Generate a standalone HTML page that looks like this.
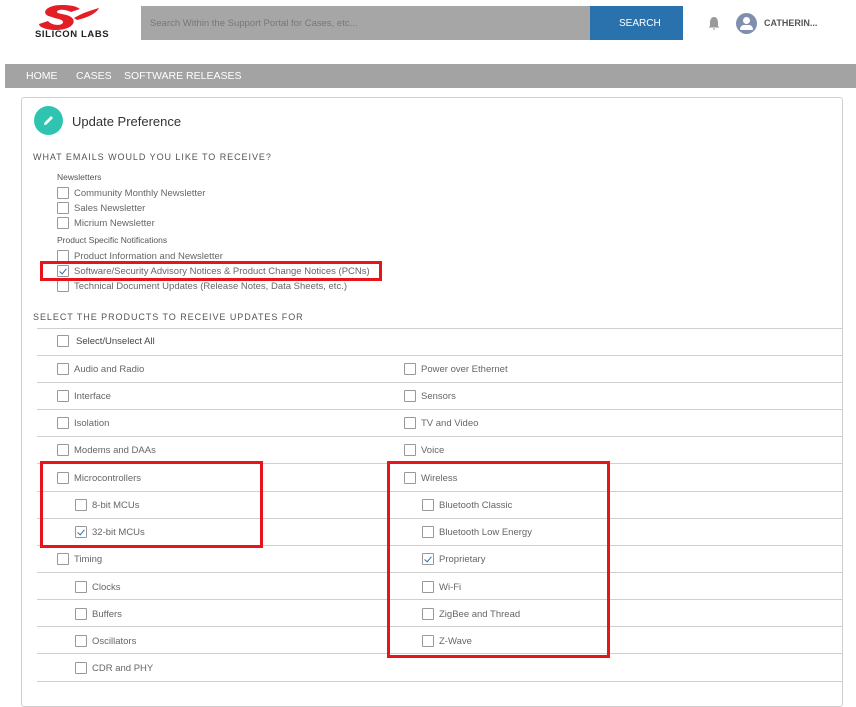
<!DOCTYPE html>
<html><head><meta charset="utf-8"><style>
*{margin:0;padding:0;box-sizing:border-box}
body{width:856px;height:700px;background:#fff;font-family:"Liberation Sans",sans-serif;position:relative;overflow:hidden;color:#555}
.a{position:absolute}
.cb{position:absolute;width:12px;height:12px;border:1px solid #999;background:#fff;border-radius:1px}
.t{position:absolute;font-size:9.5px;color:#666;white-space:nowrap;margin-top:1px}
.ln{position:absolute;height:1px;background:#cfcfcf}
.rb{position:absolute;border:3px solid #e8141c}
.ck::after{content:"";position:absolute;left:3px;top:1px;width:3px;height:6px;border:solid #2a6db0;border-width:0 1.5px 1.5px 0;transform:rotate(40deg)}
</style></head><body>
<!-- logo -->
<svg class="a" style="left:36px;top:3px" width="68" height="30" viewBox="0 0 68 30">
<path d="M16 14 C4 12 8 2 26 2 C34 2 40 3 44 6 L35 9 C29 6 21 6 21 9 C21 11 31 11 35 14 C42 19 35 27 20 27 C10 27 3 24 3 21 L12 18 C16 23 27 23 27 19 C27 16 20 16 16 14 Z" fill="#e21f26"/>
<path d="M38 15 C46 10 56 7 63 5 C60 11 50 15 41 17 Z" fill="#e21f26"/>
</svg>
<div class="t" style="left:35px;top:28px;font-size:9.5px;color:#222;letter-spacing:0.6px;font-weight:bold">SILICON LABS</div>
<div class="a" style="left:141px;top:6px;width:449px;height:34px;background:#a6a6a6"></div>
<div class="t" style="left:150px;top:17px;color:#777;font-size:9.5px">Search Within the Support Portal for Cases, etc...</div>
<div class="a" style="left:590px;top:6px;width:93px;height:34px;background:#2a72ad"></div>
<div class="t" style="left:619px;top:17px;color:#fff;font-size:10px">SEARCH</div>
<svg class="a" style="left:708px;top:16px" width="12" height="14" viewBox="0 0 12 14"><path d="M6 1 C3 1 2 4 2 7 L2 10 L0.5 11.5 L11.5 11.5 L10 10 L10 7 C10 4 9 1 6 1Z M4.5 12.5 L7.5 12.5 L6 14Z" fill="#9a9a9a"/></svg>
<div class="a" style="left:736px;top:13px;width:21px;height:21px;border-radius:50%;background:#7e90ae"></div>
<div class="a" style="left:743px;top:17px;width:7px;height:7px;border-radius:50%;background:#fff"></div>
<div class="a" style="left:740px;top:25px;width:13px;height:5px;border-radius:5px 5px 1px 1px;background:#fff"></div>
<div class="t" style="left:764px;top:17px;font-size:9px;font-weight:bold;color:#555">CATHERIN...</div>
<!-- nav -->
<div class="a" style="left:5px;top:64px;width:851px;height:24px;background:#a3a3a3"></div>
<div class="t" style="left:26px;top:69px;color:#fff;font-size:10.5px">HOME</div>
<div class="t" style="left:76px;top:69px;color:#fff;font-size:10.5px">CASES</div>
<div class="t" style="left:124px;top:69px;color:#fff;font-size:10.5px">SOFTWARE RELEASES</div>
<!-- card -->
<div class="a" style="left:21px;top:97px;width:822px;height:610px;border:1px solid #cfcfcf;border-radius:3px"></div>
<div class="a" style="left:34px;top:106px;width:29px;height:29px;border-radius:50%;background:#2ec4b0"></div>
<svg class="a" style="left:41px;top:113px" width="15" height="15" viewBox="0 0 15 15"><path d="M3 12 L3.5 9.5 L10 3 L12 5 L5.5 11.5 Z" fill="#fff"/></svg>
<div class="t" style="left:72px;top:113px;font-size:13px;color:#333">Update Preference</div>
<div class="t" style="left:33px;top:151px;font-size:9px;letter-spacing:0.95px;color:#555">WHAT EMAILS WOULD YOU LIKE TO RECEIVE?</div>
<div class="t" style="left:57px;top:171px;font-size:8.5px;color:#555">Newsletters</div>
<div class="cb" style="left:57px;top:187px"></div><div class="t" style="left:74px;top:187px">Community Monthly Newsletter</div>
<div class="cb" style="left:57px;top:202px"></div><div class="t" style="left:74px;top:202px">Sales Newsletter</div>
<div class="cb" style="left:57px;top:217px"></div><div class="t" style="left:74px;top:217px">Micrium Newsletter</div>
<div class="t" style="left:57px;top:234px;font-size:8.5px;color:#555">Product Specific Notifications</div>
<div class="cb" style="left:57px;top:250px"></div><div class="t" style="left:74px;top:250px">Product Information and Newsletter</div>
<div class="cb ck" style="left:57px;top:265px"></div><div class="t" style="left:74px;top:265px">Software/Security Advisory Notices &amp; Product Change Notices (PCNs)</div>
<div class="cb" style="left:57px;top:280px"></div><div class="t" style="left:74px;top:280px">Technical Document Updates (Release Notes, Data Sheets, etc.)</div>
<div class="rb" style="left:40px;top:261px;width:342px;height:20px"></div>
<div class="t" style="left:33px;top:311px;font-size:9px;letter-spacing:0.95px;color:#555">SELECT THE PRODUCTS TO RECEIVE UPDATES FOR</div>
<div class="ln" style="left:37px;top:328px;width:806px"></div>
<div class="cb" style="left:57px;top:335px"></div><div class="t" style="left:76px;top:335px;color:#444">Select/Unselect All</div>
<div class="ln" style="left:37px;top:355px;width:806px"></div>
<div class="ln" style="left:37px;top:382px;width:806px"></div>
<div class="ln" style="left:37px;top:409px;width:806px"></div>
<div class="ln" style="left:37px;top:436px;width:806px"></div>
<div class="ln" style="left:37px;top:463px;width:806px"></div>
<div class="ln" style="left:37px;top:491px;width:806px"></div>
<div class="ln" style="left:37px;top:518px;width:806px"></div>
<div class="ln" style="left:37px;top:545px;width:806px"></div>
<div class="ln" style="left:37px;top:572px;width:806px"></div>
<div class="ln" style="left:37px;top:599px;width:806px"></div>
<div class="ln" style="left:37px;top:626px;width:806px"></div>
<div class="ln" style="left:37px;top:653px;width:806px"></div>
<div class="ln" style="left:37px;top:681px;width:806px"></div>
<!-- left column -->
<div class="cb" style="left:57px;top:363px"></div><div class="t" style="left:74px;top:363px">Audio and Radio</div>
<div class="cb" style="left:57px;top:390px"></div><div class="t" style="left:74px;top:390px">Interface</div>
<div class="cb" style="left:57px;top:417px"></div><div class="t" style="left:74px;top:417px">Isolation</div>
<div class="cb" style="left:57px;top:444px"></div><div class="t" style="left:74px;top:444px">Modems and DAAs</div>
<div class="cb" style="left:57px;top:472px"></div><div class="t" style="left:74px;top:472px">Microcontrollers</div>
<div class="cb" style="left:75px;top:499px"></div><div class="t" style="left:92px;top:499px">8-bit MCUs</div>
<div class="cb ck" style="left:75px;top:526px"></div><div class="t" style="left:92px;top:526px">32-bit MCUs</div>
<div class="cb" style="left:57px;top:553px"></div><div class="t" style="left:74px;top:553px">Timing</div>
<div class="cb" style="left:75px;top:581px"></div><div class="t" style="left:92px;top:581px">Clocks</div>
<div class="cb" style="left:75px;top:608px"></div><div class="t" style="left:92px;top:608px">Buffers</div>
<div class="cb" style="left:75px;top:635px"></div><div class="t" style="left:92px;top:635px">Oscillators</div>
<div class="cb" style="left:75px;top:662px"></div><div class="t" style="left:92px;top:662px">CDR and PHY</div>
<!-- right column -->
<div class="cb" style="left:404px;top:363px"></div><div class="t" style="left:421px;top:363px">Power over Ethernet</div>
<div class="cb" style="left:404px;top:390px"></div><div class="t" style="left:421px;top:390px">Sensors</div>
<div class="cb" style="left:404px;top:417px"></div><div class="t" style="left:421px;top:417px">TV and Video</div>
<div class="cb" style="left:404px;top:444px"></div><div class="t" style="left:421px;top:444px">Voice</div>
<div class="cb" style="left:404px;top:472px"></div><div class="t" style="left:421px;top:472px">Wireless</div>
<div class="cb" style="left:422px;top:499px"></div><div class="t" style="left:439px;top:499px">Bluetooth Classic</div>
<div class="cb" style="left:422px;top:526px"></div><div class="t" style="left:439px;top:526px">Bluetooth Low Energy</div>
<div class="cb ck" style="left:422px;top:553px"></div><div class="t" style="left:439px;top:553px">Proprietary</div>
<div class="cb" style="left:422px;top:581px"></div><div class="t" style="left:439px;top:581px">Wi-Fi</div>
<div class="cb" style="left:422px;top:608px"></div><div class="t" style="left:439px;top:608px">ZigBee and Thread</div>
<div class="cb" style="left:422px;top:635px"></div><div class="t" style="left:439px;top:635px">Z-Wave</div>
<!-- red boxes -->
<div class="rb" style="left:40px;top:461px;width:223px;height:87px"></div>
<div class="rb" style="left:387px;top:461px;width:223px;height:197px"></div>
</body></html>
